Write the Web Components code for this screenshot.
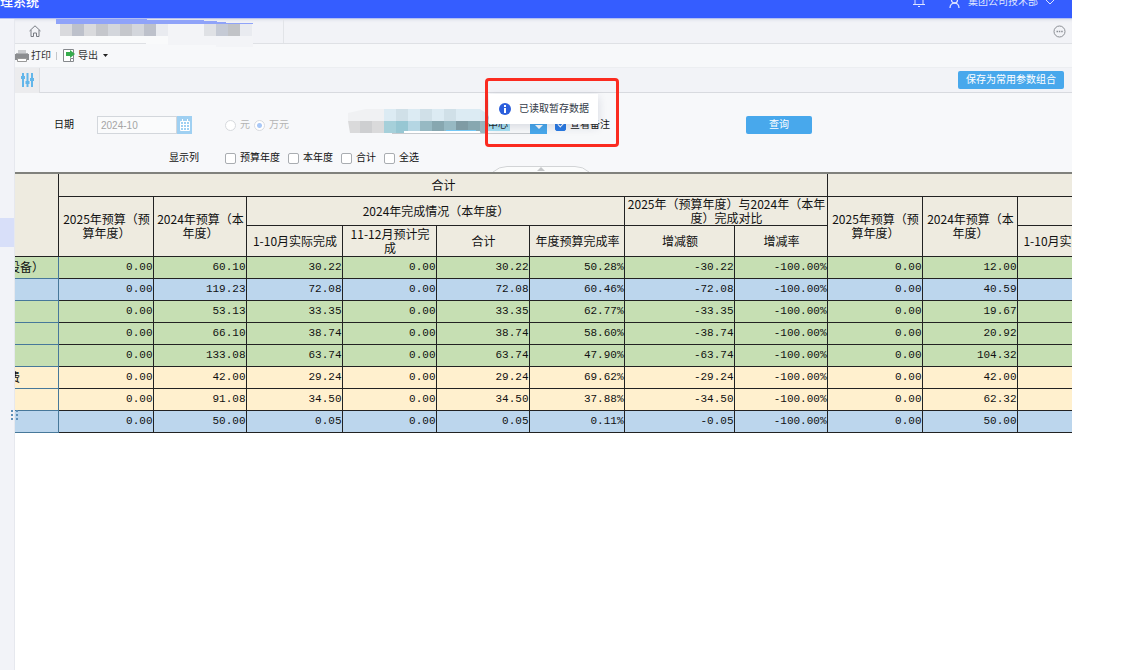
<!DOCTYPE html>
<html lang="zh-CN">
<head>
<meta charset="utf-8">
<title>管理系统</title>
<style>
  body {
    margin: 0;
    background: #fff;
    color: #222;
    font: 10px/14px "Liberation Sans", "Noto Sans CJK SC", sans-serif;
  }
</style>
</head>
<body>
<app-shell>
  <app-header slot="header" title-text="理系统">集团公司技术部</app-header>
  <tab-strip></tab-strip>
  <tool-bar></tool-bar>
  <param-bar>保存为常用参数组合</param-bar>
  <filter-panel></filter-panel>
  <budget-table></budget-table>
  <toast-note slot="toast">已读取暂存数据</toast-note>
</app-shell>

<script>
const define = (name, html) => {
  customElements.define(name, class extends HTMLElement {
    constructor() {
      super();
      this.attachShadow({ mode: "open" }).innerHTML = html;
    }
  });
};

/*************************** SHELL ***************************/
define("app-shell", `
  <style>
    :host {
      display: flex;
      flex-direction: column;
      position: relative;
      min-height: 100vh;
      margin-right: 59px;
      overflow: hidden;
    }
    .body { display: flex; flex: 1; }
    nav {
      flex: 0 0 14px;
      background: #f2f3f8;
      border-right: 1px solid #e6e8ee;
      padding-top: 199px;
      position: relative;
    }
    .current { display: block; height: 29px; background: #d8dff9; }
    .grip { position: absolute; left: 11px; top: 391px; }
    main { flex: 1; min-width: 0; }
  </style>
  <slot name="header"></slot>
  <div class="body">
    <nav>
      <a class="current" href="#" aria-label="当前菜单"></a>
      <svg class="grip" width="8" height="11" fill="#5f90b8">
        <path d="M0 0h2v2H0zM5 0h2v2H5zM0 4h2v2H0zM5 4h2v2H5zM0 8h2v2H0zM5 8h2v2H5z"/>
      </svg>
    </nav>
    <main><slot></slot></main>
  </div>
  <slot name="toast"></slot>
`);

/*************************** HEADER ***************************/
class AppHeader extends HTMLElement {
  constructor() {
    super();
    this.attachShadow({ mode: "open" });
  }

  connectedCallback() {
    this.shadowRoot.innerHTML = `
      <style>
        :host {
          display: flex;
          align-items: center;
          height: 4px;
          padding: 0 18px 14px 0;
          background: #355dff;
          border-bottom: 1px solid #b3bff3;
          color: #fff;
        }
        h1 { margin: 0; font-size: 13px; font-weight: 500; flex: 1; }
        .bell { margin-right: 24px; }
        .user { display: flex; align-items: center; gap: 8px; color: #dfe5ff; }
        svg { fill: none; stroke: #dfe5ff; }
      </style>
      <h1>${this.getAttribute("title-text")}</h1>
      <svg class="bell" width="12" height="14"><path d="M2 9V4a4 4 0 0 1 8 0v5M0 9.500h12M5 11.500h2"/></svg>
      <span class="user">
        <svg width="11" height="12" stroke-width="1.300"><circle cx="5.500" cy="4" r="3"/><path d="M1 12c0-3 2-5 4.500-5s4.500 2 4.500 5"/></svg>
        <slot></slot>
        <svg width="8" height="6"><path d="M0 1l4 4 4-4"/></svg>
      </span>
    `;
  }
}

customElements.define("app-header", AppHeader);

/*************************** TABS ***************************/
define("tab-strip", `
  <style>
    :host {
      display: flex;
      align-items: center;
      height: 24px;
      background: #f2f3f7;
      border-bottom: 1px solid #dfe1e5;
      box-shadow: inset 0 3px 3px -2px #d9dce4;
    }
    .home { display: flex; padding: 0 14px; }
    .tab { display: flex; height: 24px; width: 228px; border-right: 1px solid #e2e4e8; }
    .tab svg { overflow: visible; position: relative; margin-left: 1px; }
    .more { margin-left: auto; margin-right: 6px; padding: 0; border: 0; background: none; display: flex; }
  </style>
  <a class="home" href="#" aria-label="首页">
    <svg width="12" height="12" fill="none" stroke="#777b82"><path d="M.5 6L6 .8 11.500 6M2 5v6.500h2.500V8h3v3.500H10V5"/></svg>
  </a>
  <div class="tab">
    <svg width="198" height="24">
      <path fill="#f9fafb" d="M4 17h108v8H90v-1H4z"/>
      <path fill="#f3f4f7" d="M112 5h85v23h-37v-2h-48z"/>
      <path fill="#8fa3f9" d="M0 0h91v1h57v1h13v1h9v1h27v1H0z"/>
      <path fill="#d9dadd" d="M4 5h12v12H4zM28 5h12v12H28z"/>
      <path fill="#bdc1cb" d="M16 5h12v12H16zM88 5h12v12H88z"/>
      <path fill="#c5c7cc" d="M40 5h12v12H40zM64 5h12v12H64z"/>
      <path fill="#d3d6dc" d="M52 5h12v12H52zM76 5h12v12H76z"/>
      <path fill="#e9ebf0" d="M100 5h12v12h-12zM184 5h12v12h-12z"/>
      <path fill="#dfe1e5" d="M148 5h12v12h-12z"/>
      <path fill="#c5cad5" d="M160 5h12v12h-12z"/>
      <path fill="#c1c3c7" d="M172 5h12v12h-12z"/>
    </svg>
  </div>
  <button class="more" aria-label="更多">
    <svg width="13" height="13" fill="none" stroke="#8b8e94"><circle cx="6.500" cy="6.500" r="5.500"/><path stroke-width="1.500" d="M3.500 6.500H5M5.800 6.500h1.500M8.200 6.500h1.500"/></svg>
  </button>
`);

/*************************** TOOLBAR ***************************/
define("tool-bar", `
  <style>
    :host {
      display: flex;
      align-items: center;
      gap: 5px;
      height: 23px;
      background: #f7f8fa;
      border-bottom: 1px solid #eceef1;
    }
    button {
      display: flex;
      align-items: center;
      gap: 2px;
      padding: 0;
      border: 0;
      background: none;
      font: inherit;
      color: #333;
    }
    i { width: 1px; height: 8px; background: #c4c6ca; }
  </style>
  <button>
    <svg width="14" height="12"><path fill="#c9cbce" d="M3 0h8v4H3z"/><path fill="#8c8e91" d="M0 4h14v6H0z"/><path fill="#aeb0b3" d="M1 3h12v1H1z"/><path fill="#fff" stroke="#999" d="M2.500 8.500h9v3h-9z"/></svg>
    打印
  </button>
  <i></i>
  <button>
    <svg width="14" height="14"><path fill="#fff" stroke="#85888c" d="M1.500.5h10v12h-10z"/><path fill="#fff" stroke="#85888c" d="M8.500 12.500v-3h3"/><path fill="#36ab4c" d="M4 3h4V1l5 4-5 4V7H4z"/></svg>
    导出
    <svg width="8" height="4"><path fill="#222" d="M3 0h5L5.500 3z"/></svg>
  </button>
`);

/*************************** PARAMETER BAR ***************************/
define("param-bar", `
  <style>
    :host {
      display: flex;
      align-items: center;
      justify-content: space-between;
      height: 24px;
      padding-right: 8px;
      background: #f2f3f7;
      border-bottom: 1px solid #d8dadf;
    }
    button { font: inherit; padding: 0; border: 0; }
    .params {
      display: flex;
      align-items: center;
      justify-content: center;
      width: 25px;
      height: 25px;
      background: #ececee;
      border-right: 1px solid #dcdde0;
    }
    .save {
      height: 18px;
      padding: 0 8px;
      border-radius: 2px;
      background: #48a8ec;
      color: #fff;
    }
  </style>
  <button class="params" aria-label="参数">
    <svg width="13" height="14" fill="none" stroke="#62b6ea" stroke-width="2"><path d="M2 0v14M6.500 0v14M11 0v14"/><path stroke-width="3" d="M0 4.500h4M4.500 9.500h4M9 6.500h4"/></svg>
  </button>
  <button class="save"><slot></slot></button>
`);

/*************************** FILTERS ***************************/
define("filter-panel", `
  <style>
    :host {
      display: block;
      position: relative;
      padding: 23px 0 5px 39px;
      background: #f7f8fa;
      border-bottom: 2px solid #80817c;
      color: #111;
    }
    .row, .row label, .date { display: flex; align-items: center; }
    .row { height: 18px; }
    .row + .row { margin-top: 15px; padding-left: 115px; }
    label { gap: 4px; }
    .date { margin-left: 23px; }
    .date input {
      box-sizing: border-box;
      width: 80px;
      height: 18px;
      padding: 0 3px;
      border: 1px solid #d3d7dc;
      background: #fafbfc;
      color: #a5a5a5;
      font: inherit;
    }
    .date button { width: 15px; height: 18px; padding: 1px; border: 0; background: #9fd0f2; display: flex; }
    .units { display: flex; gap: 4px; margin-left: 33px; color: #b4b4b4; }
    input[type=radio], input[type=checkbox] {
      appearance: none;
      box-sizing: border-box;
      width: 11px;
      height: 11px;
      margin: 0;
      border: 1px solid #a9adb1;
      border-radius: 2px;
      background: #fff;
    }
    input[type=radio] { border-color: #d7dade; border-radius: 50%; }
    input[type=radio]:checked { background: radial-gradient(#a9c8f6 0 2px, #fff 3px); }
    input[type=checkbox]:checked { background: #2a7ae4; border-color: #2a7ae4; }
    input[type=checkbox]:checked::after {
      content: "";
      display: block;
      width: 3px;
      height: 5px;
      margin: 0 auto;
      border: solid #fff;
      border-width: 0 1px 1px 0;
      rotate: 45deg;
    }
    .org { display: flex; position: relative; margin-left: 103px; }
    select {
      appearance: none;
      box-sizing: border-box;
      width: 155px;
      height: 18px;
      padding: 0 17px 0 95px;
      border: 1px solid #c6cace;
      background: linear-gradient(#a8e1f3, #a8e1f3) 93px 1px / 24px 13px no-repeat #f8f9fa;
      color: #222;
      font: inherit;
    }
    .arrow { position: absolute; right: 0; top: 0; pointer-events: none; }
    .mosaic { position: absolute; left: -44px; top: -7px; pointer-events: none; }
    .remark { margin-left: 8px; }
    .query {
      width: 66px;
      height: 18px;
      margin-left: 136px;
      padding: 0;
      border: 0;
      border-radius: 2px;
      background: #48a8ec;
      color: #fff;
      font: inherit;
    }
    .cols { display: flex; gap: 8px; margin-left: 26px; }
    .fold { position: absolute; left: 478px; bottom: 0; }
  </style>
  <div class="row">
    <label for="month">日期</label>
    <span class="date">
      <input id="month" type="text" value="2024-10" readonly>
      <button aria-label="选择日期"><svg width="13" height="16" fill="none" stroke="#fff"><path d="M2.500 4.500h9v9h-9zM2.500 7.500h9M2.500 10.500h9M5.500 4.500v9M8.500 4.500v9M4.500 2v2M9.500 2v2"/></svg></button>
    </span>
    <span class="units">
      <label><input type="radio" name="unit">元</label>
      <label><input type="radio" name="unit" checked>万元</label>
    </span>
    <span class="org">
      <select aria-label="单位"><option>中心</option></select>
      <svg class="arrow" width="17" height="18"><path fill="#48a8ec" d="M0 0h17v18H0z"/><path fill="#fff" d="M5 9h8l-4 4z"/></svg>
      <svg class="mosaic" width="150" height="26">
        <path fill="#f0f1f3" d="M0 4L18 0h18v12H0z"/>
        <path fill="#dcebf3" d="M36 0h96l6 4 10 10h-10v-2H36z"/>
        <path fill="#d0e0e8" d="M48 0h12v12H48zM72 0h12v12H72zM96 0h12v12H96z"/>
        <path fill="#dadadb" d="M0 12h12v12H2zM24 12h12v12H24z"/>
        <path fill="#cecfd1" d="M12 12h12v12H12z"/>
        <path fill="#a6d0da" d="M36 12h12v12H36z"/>
        <path fill="#97c7d3" d="M48 12h12v12H48z"/>
        <path fill="#b5d6e3" d="M60 12h12v12H60z"/>
        <path fill="#97b9c3" d="M72 12h12v10H72zM96 12h12v10H96z"/>
        <path fill="#87a7b0" d="M84 12h12v10H84zM120 12h12v10h-12z"/>
        <path fill="#7f9ba4" d="M108 12h12v9h-12z"/>
        <path fill="#9ab5bd" d="M132 12h7v12h-7z"/>
        <path fill="#75c8f5" d="M98 21h30v1H98z"/>
        <path fill="#fff" d="M56 22h74l3 2H56z"/>
        <path fill="#bcd3ea" d="M138 5l9 9h-5z"/>
      </svg>
    </span>
    <label class="remark"><input type="checkbox" checked>查看备注</label>
    <button class="query">查询</button>
  </div>
  <div class="row">
    <span>显示列</span>
    <span class="cols">
      <label><input type="checkbox">预算年度</label>
      <label><input type="checkbox">本年度</label>
      <label><input type="checkbox">合计</label>
      <label><input type="checkbox">全选</label>
    </span>
  </div>
  <svg class="fold" width="96" height="6"><path fill="#fbfcfc" stroke="#d2d4d6" d="M0 6Q6 .5 14 .5h68q8 0 14 5.500"/><path fill="#c5c7c9" d="M44 5l4-4 4 4z"/></svg>
`);

/*************************** TABLE ***************************/
const WIDTHS = [43, 95, 93, 96, 94, 93, 95, 110, 93, 95, 95, 95];

const ROWS = [
  ["green", "设备）", "0.00", "60.10", "30.22", "0.00", "30.22", "50.28%", "-30.22", "-100.00%", "0.00", "12.00"],
  ["blue", "", "0.00", "119.23", "72.08", "0.00", "72.08", "60.46%", "-72.08", "-100.00%", "0.00", "40.59"],
  ["green", "", "0.00", "53.13", "33.35", "0.00", "33.35", "62.77%", "-33.35", "-100.00%", "0.00", "19.67"],
  ["green", "", "0.00", "66.10", "38.74", "0.00", "38.74", "58.60%", "-38.74", "-100.00%", "0.00", "20.92"],
  ["green", "", "0.00", "133.08", "63.74", "0.00", "63.74", "47.90%", "-63.74", "-100.00%", "0.00", "104.32"],
  ["yellow", "费", "0.00", "42.00", "29.24", "0.00", "29.24", "69.62%", "-29.24", "-100.00%", "0.00", "42.00"],
  ["yellow", "", "0.00", "91.08", "34.50", "0.00", "34.50", "37.88%", "-34.50", "-100.00%", "0.00", "62.32"],
  ["blue", "", "0.00", "50.00", "0.05", "0.00", "0.05", "0.11%", "-0.05", "-100.00%", "0.00", "50.00"],
];

class BudgetTable extends HTMLElement {
  constructor() {
    super();
    this.attachShadow({ mode: "open" });
  }

  get style() {
    return `
      :host { display: block; overflow: hidden; }
      table {
        table-layout: fixed;
        width: ${WIDTHS.reduce((a, b) => a + b)}px;
        border-collapse: collapse;
        font: 11px/14px "Liberation Mono", "Noto Sans CJK SC", monospace;
        color: #111;
      }
      th, td { padding: 0; border: 1px solid #222; }
      th {
        padding: 0 1px 0 3px;
        background: #eeebe0;
        font: 12px/14px "Noto Sans CJK SC", sans-serif;
      }
      tr > :first-child:not([scope=col]) { border-left: 0; }
      thead tr:first-child th { border-top: 0; }
      td { text-align: right; }
      tbody tr { height: 22px; background: var(--row); }
      tbody th {
        padding: 0;
        overflow: hidden;
        background: none;
        border-color: #47789a;
        text-align: left;
        text-indent: -7px;
        white-space: nowrap;
      }
      .green { --row: #c6dfb3; }
      .blue { --row: #bcd6ed; }
      .yellow { --row: #fff0ce; }
      .h22 { height: 22px; }
      .h29 { height: 29px; }
      .h31 { height: 31px; }
    `;
  }

  connectedCallback() {
    const body = ROWS.map(([tone, name, ...cells]) => `
      <tr class="${tone}"><th scope="row">${name}</th>${cells.map((c) => `<td>${c}</td>`).join("")}<td></td></tr>`).join("");

    this.shadowRoot.innerHTML = `
      <style>${this.style}</style>
      <table>
        <colgroup>${WIDTHS.map((w) => `<col style="width:${w}px">`).join("")}</colgroup>
        <thead>
          <tr class="h22"><th rowspan="3"></th><th scope="col" colspan="8">合计</th><th scope="col" colspan="3"></th></tr>
          <tr class="h29">
            <th scope="col" rowspan="2">2025年预算（预算年度）</th>
            <th scope="col" rowspan="2">2024年预算（本年度）</th>
            <th scope="col" colspan="4">2024年完成情况（本年度）</th>
            <th scope="col" colspan="2">2025年（预算年度）与2024年（本年度）完成对比</th>
            <th scope="col" rowspan="2">2025年预算（预算年度）</th>
            <th scope="col" rowspan="2">2024年预算（本年度）</th>
            <th scope="col"></th>
          </tr>
          <tr class="h31">
            <th scope="col">1-10月实际完成</th>
            <th scope="col">11-12月预计完成</th>
            <th scope="col">合计</th>
            <th scope="col">年度预算完成率</th>
            <th scope="col">增减额</th>
            <th scope="col">增减率</th>
            <th scope="col">1-10月实际完成</th>
          </tr>
        </thead>
        <tbody>${body}</tbody>
      </table>
    `;
  }
}

customElements.define("budget-table", BudgetTable);

/*************************** TOAST ***************************/
define("toast-note", `
  <style>
    :host {
      position: absolute;
      left: 485px;
      top: 78px;
      padding: 13px 18px 20px 1px;
      border: 3px solid #fb2b20;
      border-radius: 4px;
    }
    .card {
      display: flex;
      align-items: center;
      gap: 8px;
      height: 30px;
      padding: 0 9px 0 10px;
      background: #fff;
      box-shadow: 0 3px 10px #1b2a5026;
      color: #333a48;
    }
  </style>
  <div class="card" role="status">
    <svg width="12" height="12"><circle cx="6" cy="6" r="6" fill="#2c5fdc"/><path fill="#fff" d="M5 2h2v2H5zM5 5h2v5H5z"/></svg>
    <slot></slot>
  </div>
`);
</script>
</body>
</html>
